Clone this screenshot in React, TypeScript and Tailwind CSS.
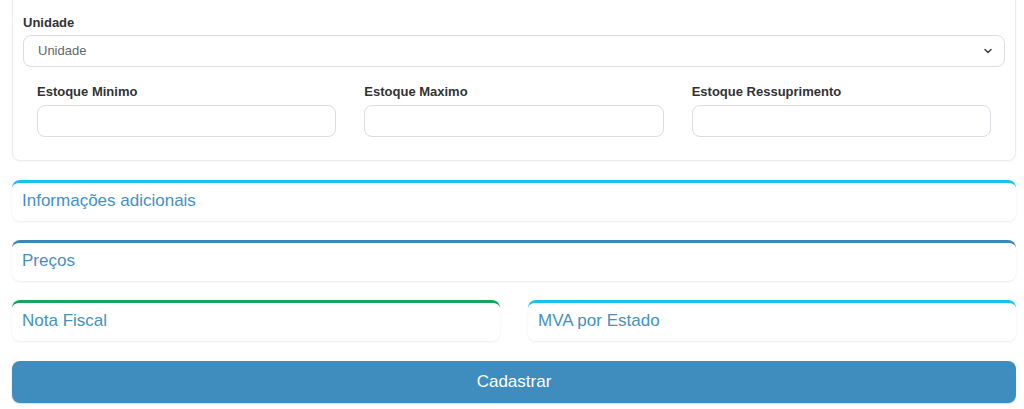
export default function App() {
  const font = { fontFamily: '"Liberation Sans", Arial, sans-serif' };
  return (
    <div className="w-[1024px] h-[409px] overflow-hidden bg-white" style={font}>
      <div className="pl-3 pr-2">
        {/* Card */}
        <div className="-mt-[10px] pt-[24px] pb-[23px] px-[10px] bg-white border border-[#ececec] rounded-lg shadow-[0_1px_3px_rgba(0,0,0,0.04)]">
          <label className="block text-[13px] font-bold text-[#333] leading-[16px] mb-[4px]">Unidade</label>
          <div className="relative">
            <select className="w-full h-[32px] rounded-lg border border-[#dcdce2] bg-white pl-[14px] text-[13px] text-[#666] appearance-none outline-none">
              <option>Unidade</option>
            </select>
            <svg
              className="absolute right-[12px] top-[12px] w-[10px] h-[8px]"
              viewBox="0 0 10 8"
              fill="none"
              stroke="#444"
              strokeWidth="1.6"
              strokeLinecap="round"
              strokeLinejoin="round"
            >
              <path d="M2 2.5l3 3 3-3" />
            </svg>
          </div>
          <div className="grid grid-cols-3 gap-[28px] px-[14px] mt-[17px]">
            {["Estoque Minimo", "Estoque Maximo", "Estoque Ressuprimento"].map((l) => (
              <div key={l}>
                <label className="block text-[13px] font-bold text-[#333] leading-[16px] mb-[5px]">{l}</label>
                <input className="w-full h-[32px] rounded-lg border border-[#dcdce2] bg-white outline-none" />
              </div>
            ))}
          </div>
        </div>

        <div className="mt-[19px] flex flex-col gap-[19px]">
          <Section title="Informações adicionais" color="border-t-[#12c4ee]" />
          <Section title="Preços" color="border-t-[#3d88b9]" />
          <div className="grid grid-cols-2 gap-[28px]">
            <Section title="Nota Fiscal" color="border-t-[#1aa35c]" />
            <Section title="MVA por Estado" color="border-t-[#12c4ee]" />
          </div>
        </div>

        <button className="mt-[20px] w-full h-[42px] rounded-lg bg-[#3e8dbe] text-white text-[17px] shadow-[0_1px_2px_rgba(0,0,0,0.15)]">
          Cadastrar
        </button>
      </div>
    </div>
  );
}

function Section({ title, color }: { title: string; color: string }) {
  return (
    <div
      className={`h-[41px] rounded-lg border-t-[3px] ${color} bg-white shadow-[0_1px_2px_rgba(0,0,0,0.08)] px-[10px] flex items-center`}
    >
      <span className="text-[17px] text-[#4591c2] leading-none -mt-[3px]">{title}</span>
    </div>
  );
}
